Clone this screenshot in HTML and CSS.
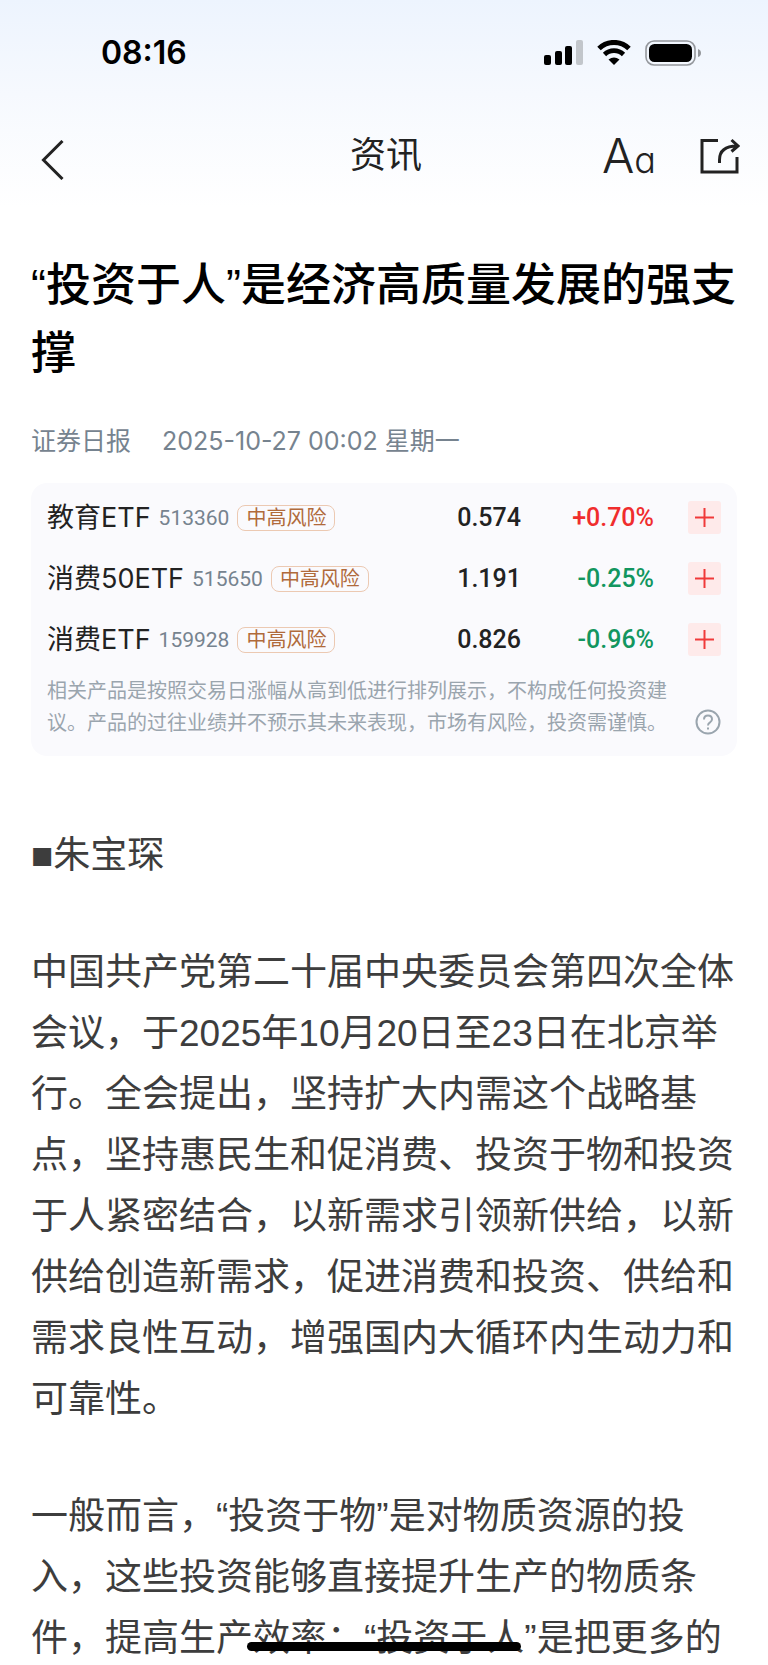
FILE: index.html
```
<!DOCTYPE html>
<html lang="zh-CN">
<head>
	<meta charset="UTF-8">
	<meta name="viewport" content="width=device-width, initial-scale=1">
	<title>资讯</title>
	<link rel="stylesheet" href="styles.css">
</head>
<body>
	<div class="page">
		<header class="header">
			<div class="status-bar">
				<span class="time">08:16</span>
				<div class="status-icons">
					<svg width="39" height="26" viewBox="0 0 39 26">
						<rect x="0" y="15" width="7" height="10" rx="2"/>
						<rect x="11" y="11" width="7" height="14" rx="2"/>
						<rect x="21" y="6" width="7" height="19" rx="2"/>
						<rect x="32" y="0" width="7" height="25" rx="2" fill="#c2c6cb"/>
					</svg>
					<svg width="34" height="26" viewBox="0 0 34 26">
						<path d="M2 8.500A21.500 21.500 0 0 1 32 8.500" fill="none" stroke="#000" stroke-width="5"/>
						<path d="M7.500 14.500A13.500 13.500 0 0 1 26.500 14.500" fill="none" stroke="#000" stroke-width="4.600"/>
						<path d="M17 25L11.500 19.500Q17 15.500 22.500 19.500Z"/>
					</svg>
					<svg width="57" height="26" viewBox="0 0 57 26">
						<rect x="1" y="1" width="49" height="24" rx="8" fill="none" stroke="#94979c" stroke-width="1.600"/>
						<rect x="4" y="4" width="43" height="18" rx="5.500"/>
						<path d="M53 9Q56 10 56 13T53 17Z" fill="#94979c"/>
					</svg>
				</div>
			</div>
			<nav class="nav">
				<button class="icon-btn back-btn" type="button" aria-label="返回">
					<svg width="24" height="40" viewBox="0 0 24 40">
						<path d="M21.500 1L2.500 20L21.500 39"/>
					</svg>
				</button>
				<span class="nav-title">资讯</span>
				<div class="nav-actions">
					<button class="icon-btn font-btn" type="button" aria-label="字号">A<small>a</small></button>
					<button class="icon-btn" type="button" aria-label="分享">
						<svg width="40" height="36" viewBox="0 0 40 36">
							<path d="M18 2.500H2V34H37V19"/>
							<path d="M19.500 25V22Q19.500 8 37 8M31.500 2L38 8L31.500 13.500"/>
						</svg>
					</button>
				</div>
			</nav>
		</header>

		<main class="article">
			<h1>“投资于人”是经济高质量发展的强支撑</h1>
			<div class="meta">
				<span>证券日报</span>
				<span>2025-10-27 00:02 星期一</span>
			</div>

			<section class="card">
				<table class="etf">
					<tr>
						<th scope="row"><div class="fund">教育ETF <span class="code">513360</span> <span class="tag">中高风险</span></div></th>
						<td class="price">0.574</td>
						<td class="change up">+0.70%</td>
						<td class="add"><button type="button" aria-label="添加教育ETF"><svg width="19" height="19" viewBox="0 0 19 19"><path d="M9.500 0V19M0 9.500H19"/></svg></button></td>
					</tr>
					<tr>
						<th scope="row"><div class="fund">消费50ETF <span class="code">515650</span> <span class="tag">中高风险</span></div></th>
						<td class="price">1.191</td>
						<td class="change down">-0.25%</td>
						<td class="add"><button type="button" aria-label="添加消费50ETF"><svg width="19" height="19" viewBox="0 0 19 19"><path d="M9.500 0V19M0 9.500H19"/></svg></button></td>
					</tr>
					<tr>
						<th scope="row"><div class="fund">消费ETF <span class="code">159928</span> <span class="tag">中高风险</span></div></th>
						<td class="price">0.826</td>
						<td class="change down">-0.96%</td>
						<td class="add"><button type="button" aria-label="添加消费ETF"><svg width="19" height="19" viewBox="0 0 19 19"><path d="M9.500 0V19M0 9.500H19"/></svg></button></td>
					</tr>
				</table>
				<div class="notice">
					<p>相关产品是按照交易日涨幅从高到低进行排列展示，不构成任何投资建议。产品的过往业绩并不预示其未来表现，市场有风险，投资需谨慎。</p>
					<button class="help" type="button" aria-label="说明">
						<svg width="26" height="26" viewBox="0 0 26 26">
							<circle cx="13" cy="13" r="11.500"/>
							<path d="M9 10.500Q9 6.500 13 6.500T17 10.200Q17 12 15 13.300Q13 14.500 13 16.500"/>
							<path d="M13 18.500V20.500"/>
						</svg>
					</button>
				</div>
			</section>

			<div class="content">
				<p>■朱宝琛</p>
				<p>中国共产党第二十届中央委员会第四次全体会议，于2025年10月20日至23日在北京举行。全会提出，坚持扩大内需这个战略基点，坚持惠民生和促消费、投资于物和投资于人紧密结合，以新需求引领新供给，以新供给创造新需求，促进消费和投资、供给和需求良性互动，增强国内大循环内生动力和可靠性。</p>
				<p>一般而言，“投资于物”是对物质资源的投入，这些投资能够直接提升生产的物质条件，提高生产效率：“投资于人”是把更多的</p>
			</div>
		</main>
		<div class="home-bar"></div>
	</div>
</body>
</html>
```
FILE: styles.css
```
*{
	box-sizing: border-box;
}
body{
	margin: 0;
	background: #fff;
	color: #3d3d3d;
	font-family: "Liberation Sans", "Noto Sans CJK SC", sans-serif;
}
button{
	display: flex;
	align-items: center;
	justify-content: center;
	padding: 0;
	border: 0;
	background: none;
	color: inherit;
}
p{
	margin: 0;
}
svg{
	display: block;
}
.page{
	position: relative;
	height: 100vh;
	overflow: hidden;
}

/* 顶部 */
.header{
	background: linear-gradient(to bottom, #edf4fe, #f6f9fe 45%, #fff);
}
.status-bar{
	display: flex;
	align-items: center;
	justify-content: space-between;
	height: 104px;
	padding: 2px 66px 0 101px;
	color: #000;
}
.time{
	font: 600 32px/40px Inter, sans-serif;
}
.status-icons{
	display: flex;
	gap: 14px;
}
.nav{
	display: grid;
	grid-template-columns: 1fr auto 1fr;
	align-items: center;
	height: 104px;
	padding: 0 28px 0 32px;
	color: #222;
}
.nav-title{
	font-size: 36px;
	line-height: 48px;
}
.nav-actions{
	display: flex;
	align-items: center;
	justify-content: flex-end;
	gap: 44px;
}
.icon-btn path{
	fill: none;
	stroke: #222;
	stroke-width: 3;
}
.back-btn{
	padding: 8px 9px 0;
}
.icon-btn{
	justify-self: start;
}
.font-btn{
	align-items: baseline;
	padding-top: 4px;
	font: 300 48px/48px Inter, sans-serif;
	font-feature-settings: "cv11";
}
.font-btn small{
	font-size: 36px;
}

/* 正文 */
.article{
	padding: 44px 31px 0;
}
h1{
	margin: 0;
	font-size: 45px;
	font-weight: 500;
	line-height: 68px;
	color: #000;
}
.meta{
	display: flex;
	gap: 31px;
	margin: 35px 0 24px;
	font-family: Inter, "Noto Sans CJK SC", sans-serif;
	font-size: 25px;
	line-height: 36px;
	color: #76838f;
}
.card{
	padding: 4px 16px 17px;
	border-radius: 16px;
	background: #fafafd;
}
.etf{
	width: 100%;
	border-collapse: collapse;
}
.etf th,
.etf td{
	height: 61px;
	padding: 0;
	text-align: right;
}
.fund{
	display: flex;
	align-items: center;
	gap: 8px;
	font: 400 27px/36px Inter, "Noto Sans CJK SC", sans-serif;
	color: #222;
}
.code{
	font-family: Roboto, sans-serif;
	font-size: 21px;
	color: #76838f;
}
.tag{
	padding: 0 8px;
	border: 1px solid #ecc9b2;
	border-radius: 8px;
	font-size: 20px;
	line-height: 24px;
	color: #b06a3b;
}
.price,
.change{
	font: 500 25px/36px Roboto, sans-serif;
	color: #222;
}
.change{
	width: 133px;
}
.up{
	color: #f02d2d;
}
.down{
	color: #12965f;
}
.add{
	width: 67px;
}
.add button{
	width: 33px;
	height: 33px;
	margin-left: auto;
	border-radius: 3px;
	background: #feeaea;
}
.add path{
	stroke: #f03a3a;
	stroke-width: 2;
}
.notice{
	display: flex;
	align-items: flex-end;
	gap: 14px;
	padding-top: 5px;
	font-size: 20px;
	line-height: 32px;
	color: #9aa5ae;
}
.notice p{
	flex: 1;
}
.help{
	padding-bottom: 4px;
}
.help svg{
	fill: none;
	stroke: #9aa5ae;
	stroke-width: 2;
}
.content{
	padding-top: 69px;
	font-size: 37px;
	line-height: 61px;
}
.content p{
	margin-bottom: 56px;
}
.home-bar{
	position: absolute;
	bottom: 14px;
	left: 50%;
	width: 274px;
	height: 9px;
	margin-left: -137px;
	border-radius: 5px;
	background: #000;
}
```
